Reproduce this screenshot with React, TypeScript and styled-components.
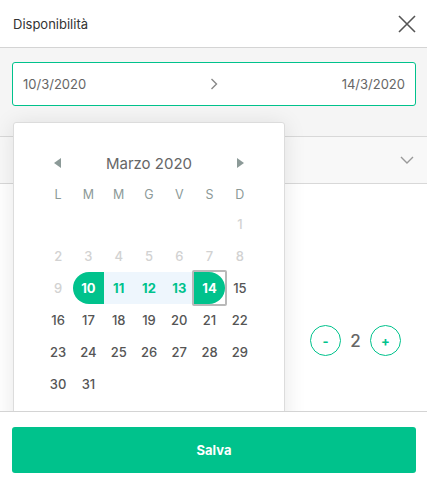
import styled, { createGlobalStyle } from "styled-components";

const GlobalStyle = createGlobalStyle`
  html, body {
    margin: 0;
    padding: 0;
    background: #ffffff;
  }
  body {
    font-family: Inter, "Noto Sans", sans-serif;
  }
`;

const GREEN = "#00c28c";

const Page = styled.div`
  width: 427px;
  height: 484px;
  display: flex;
  flex-direction: column;
  background: #fff;
`;

const Header = styled.div`
  height: 48px;
  box-sizing: border-box;
  border-bottom: 1px solid #d4d4d4;
  display: flex;
  align-items: center;
  justify-content: space-between;
  padding: 0 10px 0 13px;
`;

const Title = styled.h1`
  margin: 0;
  font-size: 13px;
  font-weight: 400;
  color: #333;
`;

const CloseButton = styled.button`
  border: 0;
  background: none;
  padding: 0;
  width: 20px;
  height: 20px;
  display: flex;
  align-items: center;
  justify-content: center;
  cursor: pointer;
`;

const Body = styled.div`
  position: relative;
  flex: 1;
  overflow: hidden;
  display: flex;
  flex-direction: column;
`;

const DateSection = styled.div`
  background: #f5f5f5;
  padding: 14px 11px 30px 12px;
`;

const DateInput = styled.div`
  height: 44px;
  box-sizing: border-box;
  border: 1px solid ${GREEN};
  border-radius: 3px;
  background: #fff;
  display: grid;
  grid-template-columns: 1fr auto 1fr;
  align-items: center;
  padding: 0 10px;
  font-size: 13px;
  color: #666;
`;

const DateValue = styled.span<{ $align: "left" | "right" }>`
  text-align: ${({ $align }) => $align};
`;

const AccordionRow = styled.div`
  height: 48px;
  box-sizing: border-box;
  border-top: 1px solid #d8d8d8;
  border-bottom: 1px solid #d8d8d8;
  background: #f8f8f8;
  display: flex;
  align-items: center;
  justify-content: flex-end;
  padding-right: 13px;
`;

const Content = styled.div`
  flex: 1;
  padding: 141px 26px 0 12px;
`;

const CounterRow = styled.div`
  display: flex;
  justify-content: flex-end;
  align-items: center;
  gap: 9px;
`;

const RoundButton = styled.button`
  width: 31px;
  height: 31px;
  border-radius: 50%;
  border: 1px solid ${GREEN};
  background: #fff;
  color: ${GREEN};
  font-family: inherit;
  font-size: 13px;
  font-weight: 700;
  display: flex;
  align-items: center;
  justify-content: center;
  padding: 0;
`;

const CounterValue = styled.span`
  font-size: 17px;
  font-weight: 500;
  color: #666;
  min-width: 11px;
  text-align: center;
`;

const Popover = styled.div`
  position: absolute;
  top: 74px;
  left: 13px;
  width: 272px;
  height: 320px;
  box-sizing: border-box;
  background: #fff;
  border: 1px solid #dcdcdc;
  border-radius: 3px;
  box-shadow: 0 2px 22px rgba(0, 0, 0, 0.1);
  padding: 28px 29px 0 29px;
`;

const MonthHeader = styled.div`
  height: 24px;
  display: grid;
  grid-template-columns: 30px 1fr 30px;
  align-items: center;
  margin-bottom: 5px;
`;

const MonthTitle = styled.span`
  text-align: center;
  font-size: 15px;
  color: #666;
`;

const Arrow = styled.span`
  display: flex;
  justify-content: center;
`;

const WeekGrid = styled.div`
  display: grid;
  grid-template-columns: repeat(7, 1fr);
`;

const WeekDay = styled.span`
  height: 28px;
  display: flex;
  align-items: center;
  justify-content: center;
  font-size: 12.5px;
  color: #8c9a98;
`;

type DayKind = "empty" | "disabled" | "normal" | "start" | "end" | "range";

const Day = styled.span<{ $kind: DayKind; $focused?: boolean }>`
  position: relative;
  height: 32px;
  display: flex;
  align-items: center;
  justify-content: center;
  font-size: 13px;
  font-weight: ${({ $kind }) =>
    $kind === "start" || $kind === "end" || $kind === "range" ? 700 : 500};
  color: ${({ $kind }) =>
    $kind === "disabled"
      ? "#d2d2d2"
      : $kind === "range"
      ? GREEN
      : $kind === "start" || $kind === "end"
      ? "#fff"
      : "#555"};
  background: ${({ $kind }) =>
    $kind === "range"
      ? "#eef6fd"
      : $kind === "start" || $kind === "end"
      ? GREEN
      : "transparent"};
  border-radius: ${({ $kind }) =>
    $kind === "start" ? "16px 0 0 16px" : $kind === "end" ? "0 16px 16px 0" : "0"};

  &::after {
    content: "";
    display: ${({ $focused }) => ($focused ? "block" : "none")};
    position: absolute;
    inset: -2px;
    border: 2px solid #b9b9b9;
    border-radius: 2px;
  }
`;

const Footer = styled.div`
  border-top: 1px solid #d4d4d4;
  padding: 15px 11px 11px 12px;
`;

const SaveButton = styled.button`
  width: 100%;
  height: 46px;
  border: 0;
  border-radius: 3px;
  background: ${GREEN};
  color: #fff;
  font-family: inherit;
  font-size: 13px;
  font-weight: 700;
`;

const weekDays = ["L", "M", "M", "G", "V", "S", "D"];

const getKind = (d: number): DayKind => {
  if (d < 10) return "disabled";
  if (d === 10) return "start";
  if (d === 14) return "end";
  if (d > 10 && d < 14) return "range";
  return "normal";
};

const CloseIcon = () => (
  <svg width="18" height="18" viewBox="0 0 18 18">
    <path d="M1 1 L17 17 M17 1 L1 17" stroke="#555" strokeWidth="1.6" fill="none" />
  </svg>
);

const App = () => {
  const cells: (number | null)[] = [...Array(6).fill(null)];
  for (let d = 1; d <= 31; d++) cells.push(d);

  return (
    <Page>
      <GlobalStyle />
      <Header>
        <Title>Disponibilità</Title>
        <CloseButton aria-label="Chiudi">
          <CloseIcon />
        </CloseButton>
      </Header>
      <Body>
        <DateSection>
          <DateInput>
            <DateValue $align="left">10/3/2020</DateValue>
            <svg width="8" height="12" viewBox="0 0 8 12">
              <path d="M1.5 1 L6.5 6 L1.5 11" stroke="#888" strokeWidth="1.4" fill="none" />
            </svg>
            <DateValue $align="right">14/3/2020</DateValue>
          </DateInput>
        </DateSection>
        <AccordionRow>
          <svg width="14" height="8" viewBox="0 0 14 8">
            <path d="M1 1 L7 7 L13 1" stroke="#999" strokeWidth="1.4" fill="none" />
          </svg>
        </AccordionRow>
        <Content>
          <CounterRow>
            <RoundButton>-</RoundButton>
            <CounterValue>2</CounterValue>
            <RoundButton>+</RoundButton>
          </CounterRow>
        </Content>

        <Popover>
          <MonthHeader>
            <Arrow>
              <svg width="8" height="10" viewBox="0 0 8 10">
                <path d="M7 0 L0 5 L7 10 Z" fill="#8c9a98" />
              </svg>
            </Arrow>
            <MonthTitle>Marzo 2020</MonthTitle>
            <Arrow>
              <svg width="8" height="10" viewBox="0 0 8 10">
                <path d="M1 0 L8 5 L1 10 Z" fill="#8c9a98" />
              </svg>
            </Arrow>
          </MonthHeader>
          <WeekGrid>
            {weekDays.map((w, i) => (
              <WeekDay key={i}>{w}</WeekDay>
            ))}
            {cells.map((d, i) =>
              d === null ? (
                <Day key={i} $kind="empty" />
              ) : (
                <Day key={i} $kind={getKind(d)} $focused={d === 14}>
                  {d}
                </Day>
              )
            )}
          </WeekGrid>
        </Popover>
      </Body>
      <Footer>
        <SaveButton>Salva</SaveButton>
      </Footer>
    </Page>
  );
};

export default App;
